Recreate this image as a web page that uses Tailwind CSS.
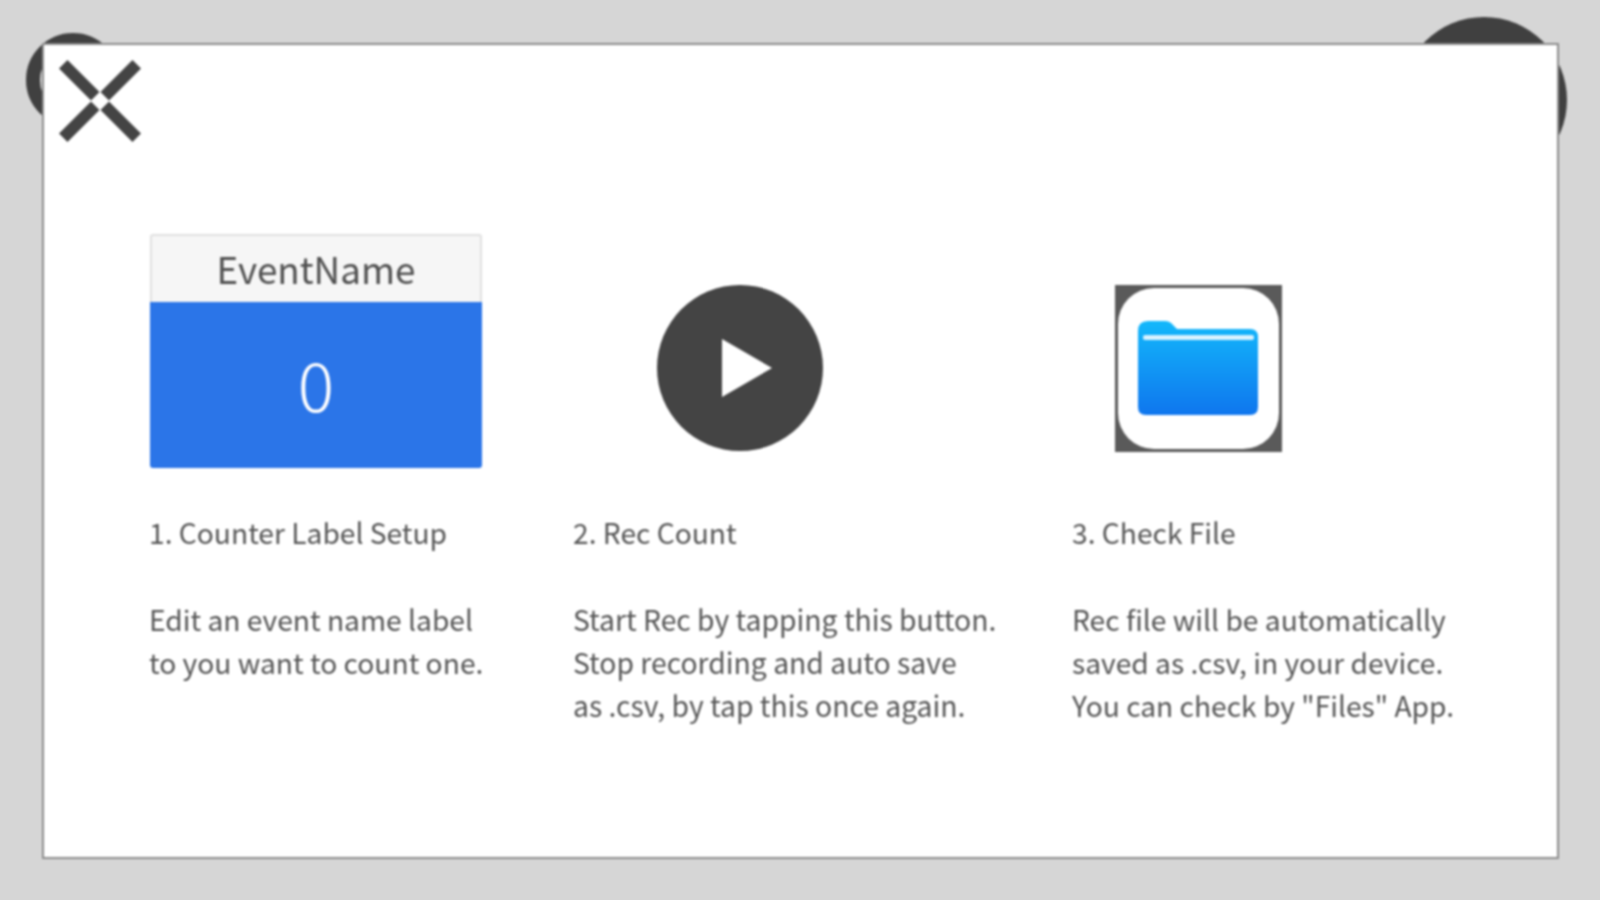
<!DOCTYPE html>
<html lang="en">
  <head>
    <meta charset="UTF-8" />
    <title>Counter Help</title>
    <script src="https://cdn.jsdelivr.net/npm/@tailwindcss/browser@4"></script>
  </head>
  <body class="bg-[#d6d6d6] overflow-hidden h-[900px] font-['Noto_Sans_CJK_JP','Noto_Sans',sans-serif]">
    <div class="relative h-[900px] pt-[43px] pl-[42px] blur-[1px]">
      <!-- buttons behind the dialog -->
      <div class="absolute left-[26px] top-[33px] w-[94px] h-[94px] rounded-full border-[14px] border-[#404040] bg-[#d6d6d6]"></div>
      <div class="absolute left-[1401px] top-[17px] w-[166px] h-[166px] rounded-full bg-[#404040]"></div>

      <div class="relative w-[1517px] h-[816px] bg-white border-2 border-[#8c8c8c] text-[#555555]">
        <svg class="absolute left-[14px] top-[14px] w-[84px] h-[84px]" viewBox="0 0 84 84">
          <g stroke="#444444" stroke-width="12" stroke-linecap="square">
            <path d="M9.5 9.5 L33 33" />
            <path d="M74.5 9.5 L51 33" />
            <path d="M9.5 74.5 L33 51" />
            <path d="M74.5 74.5 L51 51" />
          </g>
        </svg>

        <div class="flex pt-[189px] pl-[106px]">
          <div class="w-[423px]">
            <div class="w-[332px] h-[234px] flex flex-col">
              <div class="h-[68px] pb-[1px] bg-[#f6f6f6] border-t-2 border-x-2 border-[#e0e0e0] rounded-t-[3px] flex items-center justify-center text-[36.8px] text-[#505050]">EventName</div>
              <div class="flex-1 pb-[4px] bg-[#2b75e8] rounded-b-[3px] flex items-center justify-center text-[68px] font-light text-white">0</div>
            </div>
            <p class="mt-[42px] -ml-px text-[28.2px] leading-[43px]">1. Counter Label Setup</p>
            <p class="mt-[44px] -ml-px text-[28.2px] leading-[43px] whitespace-pre-line">Edit an event name label
to you want to count one.</p>
          </div>

          <div class="w-[500px]">
            <div class="h-[234px] pl-[84px] pt-[51px]">
              <svg class="w-[166px] h-[166px]" viewBox="0 0 166 166">
                <circle cx="83" cy="83" r="83" fill="#444444" />
                <path d="M65 54 L115 83 L65 112 Z" fill="#ffffff" />
              </svg>
            </div>
            <p class="mt-[42px] text-[28.2px] leading-[43px]">2. Rec Count</p>
            <p class="mt-[44px] text-[28.3px] leading-[43px] whitespace-pre-line">Start Rec by tapping this button.
Stop recording and auto save
as .csv, by tap this once again.</p>
          </div>

          <div class="flex-1">
            <div class="h-[234px] pl-[42px] pt-[51px]">
              <svg class="w-[167px] h-[167px]" viewBox="0 0 167 167">
                <defs>
                  <linearGradient id="folderFill" x1="0" y1="0" x2="0" y2="1">
                    <stop offset="0" stop-color="#13b8fb" />
                    <stop offset="1" stop-color="#0f76ee" />
                  </linearGradient>
                </defs>
                <rect width="167" height="167" fill="#5a5a5a" />
                <rect x="3" y="3" width="161" height="161" rx="36" fill="#ffffff" />
                <path d="M23 46 Q23 36 33 36 L50 36 Q55 36 58 40 L62 44 L135 44 Q143 44 143 52 L143 122 Q143 130 135 130 L31 130 Q23 130 23 122 Z" fill="url(#folderFill)" />
                <rect x="28" y="50" width="111" height="5" rx="2" fill="#d8f2ff" />
              </svg>
            </div>
            <p class="mt-[42px] -ml-px text-[28.2px] leading-[43px]">3. Check File</p>
            <p class="mt-[44px] -ml-px text-[28.2px] leading-[43px] whitespace-pre-line">Rec file will be automatically
saved as .csv, in your device.
You can check by "Files" App.</p>
          </div>
        </div>
      </div>
    </div>
  </body>
</html>
